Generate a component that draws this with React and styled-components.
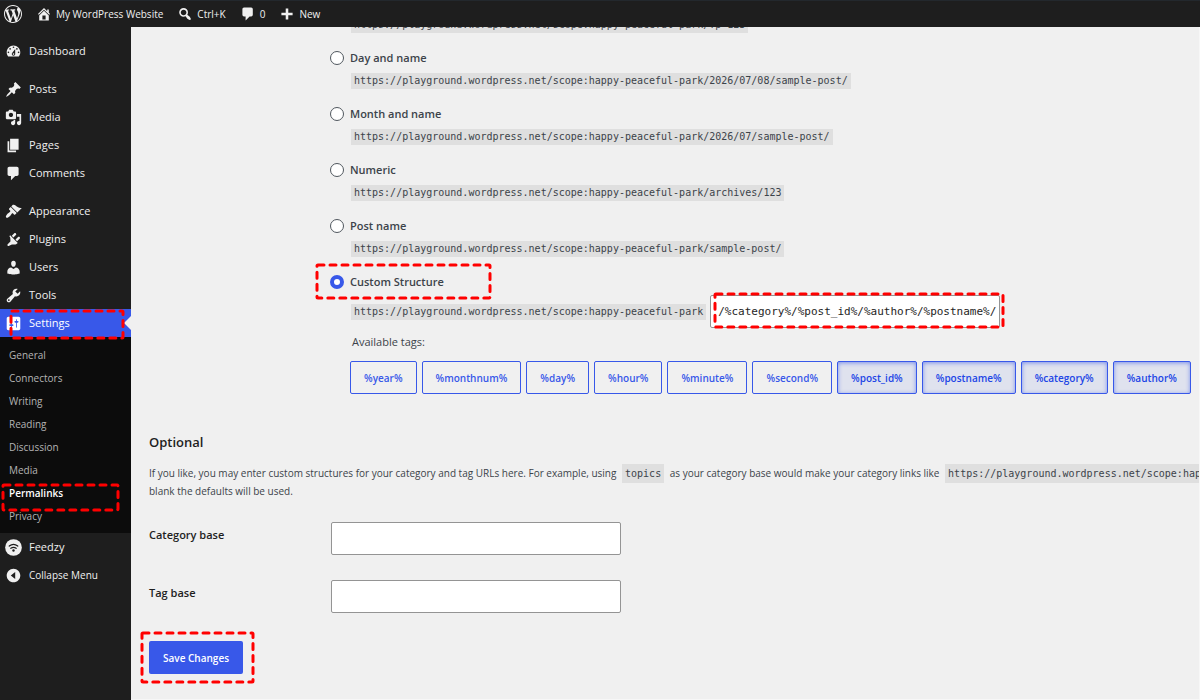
import React, { useState } from "react";
import styled, { createGlobalStyle, css } from "styled-components";

const GlobalStyle = createGlobalStyle`
  * {
    box-sizing: border-box;
  }
  body {
    margin: 0;
    background-color: #f0f0f0;
    color: #3c434a;
    font-family: "Open Sans", "Noto Sans", sans-serif;
    font-size: 11px;
    line-height: 18px;
  }
  button,
  input {
    font-family: inherit;
    font-size: inherit;
    margin: 0;
  }
`;

const mono = css`
  font-family: "DejaVu Sans Mono", "Liberation Mono", monospace;
`;

const Page = styled.div`
  display: flex;
  flex-direction: column;
  height: 100vh;
  overflow: hidden;
`;

const AdminBar = styled.header`
  display: flex;
  align-items: center;
  flex: none;
  height: 27px;
  padding: 0 4px;
  gap: 14px;
  background-color: #1e1e1e;
  border-top: 1px solid #23282d;
`;

const BarLink = styled.a`
  display: flex;
  align-items: center;
  gap: 4px;
  color: #f0f0f0;
  font-size: 10px;
  text-decoration: none;
  white-space: nowrap;
`;

const Body = styled.div`
  display: flex;
  flex: 1;
  min-height: 0;
`;

const Sidebar = styled.nav`
  flex: none;
  width: 131px;
  padding-top: 10px;
  background-color: #1e1e1e;
`;

const MenuGroup = styled.ul`
  list-style: none;
  margin: 0 0 10px;
  padding: 0;
`;

const MenuItem = styled.li`
  position: relative;
`;

const MenuLink = styled.a`
  position: relative;
  display: flex;
  align-items: center;
  gap: 7px;
  height: 28px;
  padding-left: 5px;
  color: #f0f0f0;
  font-size: ${(props) => (props.$small ? 10 : 11)}px;
  text-decoration: none;
  white-space: nowrap;
  ${(props) =>
    props.$active &&
    css`
      background-color: #3858e9;
      color: #fff;
      &::after {
        content: "";
        position: absolute;
        right: 0;
        top: 7px;
        border: 7px solid transparent;
        border-left-width: 0;
        border-right-color: #f0f0f0;
      }
    `}
`;

const SubMenu = styled.ul`
  list-style: none;
  margin: 0;
  padding: 7px 0 5px;
  background-color: #0c0c0c;
`;

const SubLink = styled.a`
  display: block;
  padding-left: 9px;
  font-size: 10px;
  line-height: 23px;
  color: ${(props) => (props.$current ? "#fff" : "#b4b4b4")};
  font-weight: ${(props) => (props.$current ? 600 : 400)};
  text-decoration: none;
`;

const Main = styled.main`
  flex: 1;
  min-width: 0;
  overflow: hidden;
  padding-left: 18px;
  border: solid #f7f7f7;
  border-width: 0 1px 1px 0;
`;

const Options = styled.div`
  margin: -34px 0 0 181px;
`;

const Option = styled.div`
  margin-bottom: 16px;
`;

const OptionLabel = styled.label`
  position: relative;
  display: flex;
  align-items: center;
  gap: 6px;
  width: fit-content;
  font-weight: 600;
  height: 18px;
`;

const Radio = styled.input`
  appearance: none;
  flex: none;
  width: 14px;
  height: 14px;
  border: 1px solid #50575e;
  border-radius: 50%;
  background-color: #fff;
  &:checked {
    border: 4px solid #3858e9;
  }
`;

const Indent = styled.div`
  display: flex;
  align-items: center;
  gap: 4px;
  margin: ${(props) => (props.$tight ? 4 : 6)}px 0 0 21px;
`;

const Code = styled.code`
  ${mono}
  font-size: 10px;
  line-height: 16px;
  padding: 0 3px;
  background-color: #dfdfdf;
  white-space: nowrap;
`;

const InlineCode = styled(Code)`
  margin: 0 3px;
  padding: 4px 3px;
`;

const Field = styled.div`
  position: relative;
`;

const TextInput = styled.input`
  display: block;
  width: 290px;
  height: 33px;
  padding: 0 3px 0 7px;
  border: 1px solid #949494;
  border-radius: 2px;
  background-color: #fff;
  color: #1e1e1e;
`;

const CodeInput = styled(TextInput)`
  ${mono}
`;

const TagsTitle = styled.p`
  margin: 5px 0 10px 22px;
`;

const Tags = styled.div`
  display: flex;
  gap: 5px;
  margin-left: 20px;
`;

const TagButton = styled.button`
  flex: none;
  height: 33px;
  padding: 0 13px;
  border: 1px solid #3858e9;
  border-radius: 2px;
  background-color: transparent;
  color: #3858e9;
  font-size: 10px;
  font-weight: 600;
  ${(props) =>
    props.$pressed &&
    css`
      background-color: #dfe2ee;
      color: #2145e6;
      box-shadow: inset 0 1px 4px rgba(56, 88, 233, 0.6);
    `}
`;

const Title = styled.h2`
  margin: 38px 0 0;
  font-size: 13px;
  line-height: 20px;
  font-weight: 600;
  color: #1e1e1e;
`;

const Description = styled.p`
  margin: 12px 0 22px;
  font-size: 10px;
  white-space: nowrap;
`;

const FormRow = styled.div`
  display: flex;
  margin-bottom: 25px;
`;

const FormLabel = styled.label`
  flex: none;
  width: 182px;
  padding-top: 4px;
  font-weight: 600;
  color: #1e1e1e;
`;

const Submit = styled.div`
  position: relative;
  width: fit-content;
  margin-top: 28px;
`;

const SaveButton = styled.button`
  display: block;
  height: 33px;
  padding: 0 14px;
  border: 0;
  border-radius: 2px;
  background-color: #3858e9;
  color: #fff;
  font-size: 10px;
  font-weight: 600;
`;

const Mark = styled.svg`
  position: absolute;
  top: ${(props) => props.$top}px;
  left: ${(props) => props.$left}px;
  width: ${(props) => props.$width}px;
  height: ${(props) => props.$height}px;
  overflow: visible;
  pointer-events: none;
  z-index: 1;
`;

const Highlight = (props) => (
  <Mark {...props} aria-hidden="true">
    <rect
      width="100%"
      height="100%"
      rx="1"
      fill="none"
      stroke="#f00"
      strokeWidth="3"
      strokeLinecap="round"
      strokeDasharray="6 6"
    />
  </Mark>
);

const IconSvg = styled.svg`
  flex: none;
  fill: currentColor;
`;

const icons = {
  wordpress:
    "M20 10c0-5.51-4.49-10-10-10C4.48 0 0 4.49 0 10c0 5.52 4.48 10 10 10 5.51 0 10-4.48 10-10zM7.78 15.37L4.37 6.22c.55-.02 1.17-.08 1.17-.08.5-.06.44-1.13-.06-1.11 0 0-1.45.11-2.37.11-.18 0-.37 0-.58-.01C4.12 2.69 6.87 1.11 10 1.11c2.33 0 4.45.87 6.05 2.34-.68-.11-1.65.39-1.65 1.58 0 .74.45 1.36.9 2.1.35.61.55 1.36.55 2.46 0 1.49-1.4 5-1.4 5l-3.03-8.37c.54-.02.82-.17.82-.17.5-.05.44-1.25-.06-1.22 0 0-1.44.12-2.38.12-.87 0-2.33-.12-2.33-.12-.5-.03-.56 1.2-.06 1.22l.92.08 1.26 3.41zM17.41 10c.24-.64.74-1.87.43-4.25.7 1.29 1.05 2.71 1.05 4.25 0 3.29-1.73 6.24-4.4 7.78.97-2.59 1.94-5.2 2.92-7.78zM6.1 18.09C3.12 16.65 1.11 13.53 1.11 10c0-1.3.23-2.48.72-3.59C3.25 10.3 4.67 14.2 6.1 18.09zm4.03-6.63l2.58 6.98c-.86.29-1.76.45-2.71.45-.79 0-1.57-.11-2.29-.33.81-2.38 1.62-4.74 2.42-7.1z",
  home: "M16 8.5l1.53 1.53-1.06 1.06L10 4.6l-6.47 6.49-1.06-1.06L10 2.5l4 4v-2h2v4zm-6-2.46l6 5.99V18H4v-5.97zM12 17v-5H8v5h4z",
  search:
    "M12.14 4.18c1.87 1.87 2.11 4.75.72 6.89.12.1.22.21.36.31.2.16.47.36.81.59.34.24.56.39.66.47.42.31.73.57.94.78.32.32.6.65.84 1 .25.35.44.69.59 1.04.14.35.21.68.18 1-.02.32-.14.59-.36.81s-.49.34-.81.36c-.31.02-.65-.04-.99-.19-.35-.14-.7-.34-1.04-.59-.35-.24-.68-.52-1-.84-.21-.21-.47-.52-.77-.93-.1-.13-.25-.35-.47-.66-.22-.32-.4-.57-.56-.78-.16-.2-.29-.35-.44-.5-2.07 1.09-4.69.76-6.44-.98-2.14-2.15-2.14-5.64 0-7.78 2.15-2.15 5.63-2.15 7.78 0zm-1.41 6.36c1.36-1.37 1.36-3.58 0-4.95-1.37-1.37-3.59-1.37-4.95 0-1.37 1.37-1.37 3.58 0 4.95 1.36 1.37 3.58 1.37 4.95 0z",
  comments:
    "M5 2h9c1.1 0 2 .9 2 2v7c0 1.1-.9 2-2 2h-2l-5 5v-5H5c-1.1 0-2-.9-2-2V4c0-1.1.9-2 2-2z",
  plus: "M17 8.400v3.200h-5.400V17H8.400v-5.400H3V8.400h5.400V3h3.200v5.400z",
  dashboard:
    "M3.76 16h12.48c1.1-1.37 1.76-3.11 1.76-5 0-4.42-3.58-8-8-8s-8 3.58-8 8c0 1.89.66 3.63 1.76 5zM10 4c.55 0 1 .45 1 1s-.45 1-1 1-1-.45-1-1 .45-1 1-1zM6 6c.55 0 1 .45 1 1s-.45 1-1 1-1-.45-1-1 .45-1 1-1zm8 0c.55 0 1 .45 1 1s-.45 1-1 1-1-.45-1-1 .45-1 1-1zm-5.37 5.55L12 7v6c0 1.1-.9 2-2 2s-2-.9-2-2c0-.57.24-1.08.63-1.45zM4 10c.55 0 1 .45 1 1s-.45 1-1 1-1-.45-1-1 .45-1 1-1zm12 0c.55 0 1 .45 1 1s-.45 1-1 1-1-.45-1-1 .45-1 1-1zm-5 3c0-.55-.45-1-1-1s-1 .45-1 1 .45 1 1 1 1-.45 1-1z",
  posts:
    "M10.44 3.02l1.82-1.82 6.36 6.35-1.83 1.82c-1.05-.68-2.48-.57-3.41.36l-.75.75c-.92.93-1.04 2.35-.35 3.41l-1.83 1.82-2.41-2.41-2.8 2.79c-.42.42-3.38 2.71-3.8 2.29s1.86-3.39 2.28-3.81l2.79-2.79L4.1 9.36l1.83-1.82c1.05.69 2.48.57 3.4-.36l.75-.75c.93-.92 1.05-2.35.36-3.41z",
  media:
    "M13 11V4c0-.55-.45-1-1-1h-1.67L9 1H5L3.67 3H2c-.55 0-1 .45-1 1v7c0 .55.45 1 1 1h10c.55 0 1-.45 1-1zM7 4.5c1.38 0 2.5 1.12 2.5 2.5S8.38 9.5 7 9.5 4.5 8.38 4.5 7 5.62 4.5 7 4.5zM14 6h5v10.5c0 1.38-1.12 2.5-2.5 2.5S14 17.88 14 16.5s1.12-2.5 2.5-2.5c.17 0 .34.02.5.05V9h-3V6zm-4 8.05V13h2v3.5c0 1.38-1.12 2.5-2.5 2.5S7 17.88 7 16.5 8.12 14 9.5 14c.17 0 .34.02.5.05z",
  pages: "M6 15V2h10v13H6zm-1 1h8v2H3V5h2v11z",
  appearance:
    "M14.48 11.06L7.41 3.99l1.5-1.5c.5-.56 2.3-.47 3.51.32 1.21.8 1.43 1.28 2.91 2.1 1.18.64 2.45 1.26 4.45.85zm-.71.71L6.7 4.7 4.93 6.47c-.39.39-.39 1.02 0 1.41l1.06 1.06c.39.39.39 1.03 0 1.42-.6.6-1.43 1.11-2.21 1.69-.35.26-.7.53-1.01.84C1.43 14.23.4 16.08 1.4 17.07c.99 1 2.84-.03 4.18-1.36.31-.31.58-.66.85-1.02.57-.78 1.08-1.61 1.69-2.21.39-.39 1.02-.39 1.41 0l1.06 1.06c.39.39 1.02.39 1.41 0z",
  plugins:
    "M13.11 4.36L9.87 7.6 8 5.73l3.24-3.24c.35-.34 1.05-.2 1.56.32.52.51.66 1.21.31 1.55zm-8 1.77l.91-1.12 9.01 9.01-1.19.84c-.71.71-2.63 1.16-3.82 1.16H8.14L4.9 17.26c-.49.49-1.27.49-1.76 0s-.49-1.27 0-1.76l3.24-3.24v-1.88c0-1.18.02-3.54-1.27-4.25zm7.26 3.97l3.24-3.24c.34-.35 1.04-.21 1.55.31.52.51.66 1.21.31 1.55l-3.24 3.25z",
  users:
    "M10 9.25c-2.27 0-2.73-3.44-2.73-3.44C7 4.02 7.82 2 9.97 2c2.16 0 2.98 2.02 2.71 3.81 0 0-.41 3.44-2.68 3.44zm0 2.57L12.72 10c2.39 0 4.52 2.33 4.52 4.53v2.49s-3.65 1.13-7.24 1.13c-3.65 0-7.24-1.13-7.24-1.13v-2.49c0-2.25 1.94-4.48 4.47-4.48z",
  tools:
    "M16.68 9.77c-1.34 1.34-3.3 1.67-4.95.99l-5.41 6.52c-.99.99-2.59.99-3.58 0s-.99-2.59 0-3.57l6.52-5.42c-.68-1.65-.35-3.61.99-4.95 1.28-1.28 3.12-1.62 4.72-1.06l-2.89 2.89 2.82 2.82 2.86-2.87c.53 1.58.18 3.39-1.08 4.65zM3.81 16.21c.4.39 1.04.39 1.43 0 .4-.4.4-1.04 0-1.43-.39-.4-1.03-.4-1.43 0-.39.39-.39 1.03 0 1.43z",
  settings:
    "M18 16V4c0-1.1-.9-2-2-2H4c-1.1 0-2 .9-2 2v12c0 1.1.9 2 2 2h12c1.1 0 2-.9 2-2zM8 11h1c.55 0 1 .45 1 1s-.45 1-1 1H8v1.5c0 .28-.22.5-.5.5s-.5-.22-.5-.5V13H6c-.55 0-1-.45-1-1s.45-1 1-1h1V5.5c0-.28.22-.5.5-.5s.5.22.5.5V11zm5-2h-1c-.55 0-1-.45-1-1s.45-1 1-1h1V5.5c0-.28.22-.5.5-.5s.5.22.5.5V7h1c.55 0 1 .45 1 1s-.45 1-1 1h-1v5.5c0 .28-.22.5-.5.5s-.5-.22-.5-.5V9z",
  collapse:
    "M10 2c4.400 0 8 3.600 8 8s-3.600 8-8 8-8-3.600-8-8 3.600-8 8-8zm2 12V6l-5.200 4z",
};

const Icon = ({ name, size = 17 }) => (
  <IconSvg width={size} height={size} viewBox="0 0 20 20" fillRule="evenodd" aria-hidden="true">
    <path d={icons[name]} />
  </IconSvg>
);

const FeedzyIcon = () => (
  <IconSvg width="17" height="17" viewBox="0 0 20 20" aria-hidden="true">
    <circle cx="10" cy="10" r="9.800" />
    <g fill="none" stroke="#1e1e1e" strokeWidth="1.500" strokeLinecap="round">
      <path d="M5 8.300c3.200-2.500 6.800-2.500 10 0" />
      <path d="M6.900 11c2-1.500 4.200-1.500 6.200 0" />
    </g>
    <circle cx="10" cy="13.600" r="1.400" fill="#1e1e1e" />
  </IconSvg>
);

const barLinks = [
  { icon: "home", text: "My WordPress Website" },
  { icon: "search", text: "Ctrl+K" },
  { icon: "comments", text: "0" },
  { icon: "plus", text: "New" },
];

const menu = [
  [{ icon: "dashboard", text: "Dashboard" }],
  [
    { icon: "posts", text: "Posts" },
    { icon: "media", text: "Media" },
    { icon: "pages", text: "Pages" },
    { icon: "comments", text: "Comments" },
  ],
  [
    { icon: "appearance", text: "Appearance" },
    { icon: "plugins", text: "Plugins" },
    { icon: "users", text: "Users" },
    { icon: "tools", text: "Tools" },
    { icon: "settings", text: "Settings" },
  ],
];

const subMenu = [
  "General",
  "Connectors",
  "Writing",
  "Reading",
  "Discussion",
  "Media",
  "Permalinks",
  "Privacy",
];

const base = "https://playground.wordpress.net/scope:happy-peaceful-park";

const structures = [
  { label: "Plain", path: "/?p=123" },
  { label: "Day and name", path: "/2026/07/08/sample-post/" },
  { label: "Month and name", path: "/2026/07/sample-post/" },
  { label: "Numeric", path: "/archives/123" },
  { label: "Post name", path: "/sample-post/" },
];

const tags = [
  "year",
  "monthnum",
  "day",
  "hour",
  "minute",
  "second",
  "post_id",
  "postname",
  "category",
  "author",
];

const App = () => {
  const [selected, setSelected] = useState("Custom Structure");
  const [structure, setStructure] = useState(
    "/%category%/%post_id%/%author%/%postname%/"
  );
  const toggleTag = (tag) => {
    setStructure(
      structure.includes(tag)
        ? structure.replace(`${tag}/`, "")
        : `${structure}${tag}/`
    );
  };
  return (
    <Page>
      <GlobalStyle />
      <AdminBar>
        <BarLink href="#wordpress" aria-label="About WordPress">
          <Icon name="wordpress" size={18} />
        </BarLink>
        {barLinks.map((item) => (
          <BarLink href="#bar" key={item.text}>
            <Icon name={item.icon} size={16} />
            {item.text}
          </BarLink>
        ))}
      </AdminBar>
      <Body>
        <Sidebar>
          {menu.map((group) => (
            <MenuGroup key={group[0].text}>
              {group.map((item) => (
                <MenuItem key={item.text}>
                  <MenuLink href="#menu" $active={item.text === "Settings"}>
                    <Icon name={item.icon} />
                    {item.text}
                  </MenuLink>
                  {item.text === "Settings" && (
                    <>
                      <Highlight $top={2} $left={11} $width={112} $height={27} />
                      <SubMenu>
                        {subMenu.map((text) => (
                          <MenuItem key={text}>
                            <SubLink href="#submenu" $current={text === "Permalinks"}>
                              {text}
                            </SubLink>
                            {text === "Permalinks" && (
                              <Highlight $top={3} $left={3} $width={115} $height={25} />
                            )}
                          </MenuItem>
                        ))}
                      </SubMenu>
                      <MenuLink href="#feedzy">
                        <FeedzyIcon />
                        Feedzy
                      </MenuLink>
                      <MenuLink href="#collapse" $small>
                        <Icon name="collapse" />
                        Collapse Menu
                      </MenuLink>
                    </>
                  )}
                </MenuItem>
              ))}
            </MenuGroup>
          ))}
        </Sidebar>
        <Main>
          <Options>
            {structures.map(({ label, path }) => (
              <Option key={label}>
                <OptionLabel>
                  <Radio
                    type="radio"
                    name="structure"
                    checked={selected === label}
                    onChange={() => setSelected(label)}
                  />
                  {label}
                </OptionLabel>
                <Indent>
                  <Code>{base + path}</Code>
                </Indent>
              </Option>
            ))}
            <OptionLabel>
              <Radio
                type="radio"
                name="structure"
                checked={selected === "Custom Structure"}
                onChange={() => setSelected("Custom Structure")}
              />
              Custom Structure
              <Highlight $top={-8} $left={-13} $width={173} $height={33} />
            </OptionLabel>
            <Indent $tight>
              <Code>{base}</Code>
              <Field>
                <CodeInput
                  type="text"
                  aria-label="Customize permalink structure"
                  value={structure}
                  onChange={(e) => setStructure(e.target.value)}
                />
                <Highlight $top={-1} $left={5} $width={288} $height={33} />
              </Field>
            </Indent>
            <TagsTitle>Available tags:</TagsTitle>
            <Tags>
              {tags.map((tag) => (
                <TagButton
                  type="button"
                  key={tag}
                  $pressed={structure.includes(`%${tag}%`)}
                  aria-pressed={structure.includes(`%${tag}%`)}
                  onClick={() => toggleTag(`%${tag}%`)}
                >
                  %{tag}%
                </TagButton>
              ))}
            </Tags>
          </Options>
          <Title>Optional</Title>
          <Description>
            If you like, you may enter custom structures for your category and tag
            URLs here. For example, using <InlineCode>topics</InlineCode> as your
            category base would make your category links like{" "}
            <InlineCode>{base}/topics/uncategorized/</InlineCode>
            <br />
            blank the defaults will be used.
          </Description>
          <FormRow>
            <FormLabel htmlFor="category_base">Category base</FormLabel>
            <TextInput id="category_base" type="text" />
          </FormRow>
          <FormRow>
            <FormLabel htmlFor="tag_base">Tag base</FormLabel>
            <TextInput id="tag_base" type="text" />
          </FormRow>
          <Submit>
            <SaveButton type="submit">Save Changes</SaveButton>
            <Highlight $top={-8} $left={-7} $width={111} $height={49} />
          </Submit>
        </Main>
      </Body>
    </Page>
  );
};

export default App;
